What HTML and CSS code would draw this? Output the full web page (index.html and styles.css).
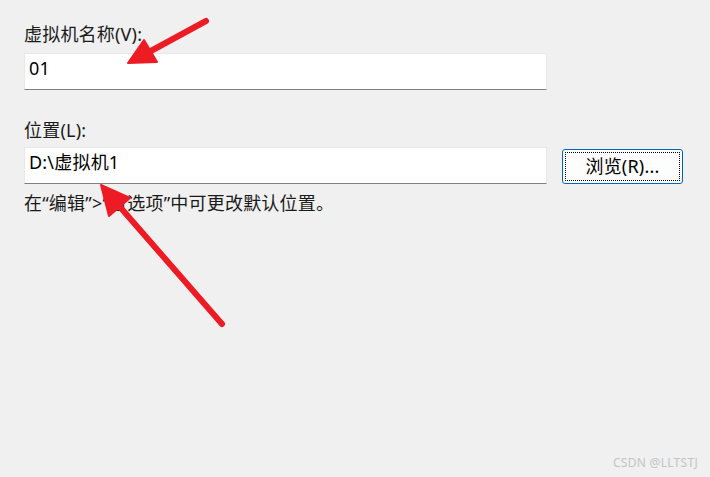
FILE: index.html
```html
<!DOCTYPE html>
<html lang="zh-CN">
<head>
    <meta charset="UTF-8">
    <title>新建虚拟机向导</title>
    <link rel="stylesheet" href="styles.css">
</head>
<body>
    <div class="panel">
        <div class="field">
            <label class="label">虚拟机名称(V):</label>
            <div class="textbox">01</div>
        </div>

        <div class="field field-location">
            <label class="label">位置(L):</label>
            <div class="input-row">
                <div class="textbox">D:\虚拟机1</div>
                <button class="browse"><span class="focus-ring">浏览(R)...</span></button>
            </div>
            <p class="hint">在“编辑”&gt;“首选项”中可更改默认位置。</p>
        </div>
    </div>

    <!-- annotation arrows drawn over the dialog -->
    <svg class="annotations" width="710" height="477" viewBox="0 0 710 477">
        <g fill="#ed1c24" stroke="#ed1c24" stroke-linecap="round" stroke-linejoin="round">
            <line x1="206" y1="21" x2="149" y2="52" stroke-width="6"/>
            <polygon points="128,63 144,40 157,62" stroke-width="2"/>
            <line x1="222" y1="324" x2="120" y2="207" stroke-width="6"/>
            <polygon points="101,185 130,198 109,216" stroke-width="2"/>
        </g>
    </svg>

    <div class="watermark">CSDN @LLTSTJ</div>
</body>
</html>
```

FILE: styles.css
```css
body {
    margin: 0;
    width: 710px;
    height: 477px;
    background: #f0f0f0;
    font-family: "Noto Sans", "Noto Sans CJK SC", sans-serif;
    font-size: 18px;
    letter-spacing: 0.2px;
    color: #000;
    position: relative;
    overflow: hidden;
}

.panel {
    padding: 24px 0 0 24px;
}

.label {
    display: block;
    line-height: 20px;
    height: 20px;
    color: #1a1a1a;
}

.textbox {
    box-sizing: border-box;
    width: 523px;
    height: 37px;
    margin-top: 9px;
    padding: 4px 0 0 4px;
    line-height: 20px;
    background: #fff;
    border: 1px solid #e8e8e8;
    border-bottom: 1px solid #808080;
}

.field-location {
    margin-top: 30px;
}

.field-location .textbox {
    margin-top: 7px;
}

.input-row {
    display: flex;
    align-items: center;
    gap: 15px;
}

.browse {
    box-sizing: border-box;
    width: 121px;
    height: 35px;
    margin-top: 8px;
    padding: 2px;
    background: #fdfdfd;
    border: 1px solid #0067c0;
    border-radius: 3px;
    font: inherit;
    letter-spacing: inherit;
    color: #000;
}

.focus-ring {
    display: flex;
    align-items: center;
    justify-content: center;
    height: 100%;
    box-sizing: border-box;
    border: 1px dotted #000;
    line-height: 20px;
}

.hint {
    margin: 9px 0 0;
    line-height: 20px;
    color: #1a1a1a;
}

.annotations {
    position: absolute;
    left: 0;
    top: 0;
}

.watermark {
    position: absolute;
    right: 12px;
    bottom: 6px;
    font-family: "Noto Sans", sans-serif;
    font-size: 12px;
    letter-spacing: 0.3px;
    color: #c4c4c4;
}
```
